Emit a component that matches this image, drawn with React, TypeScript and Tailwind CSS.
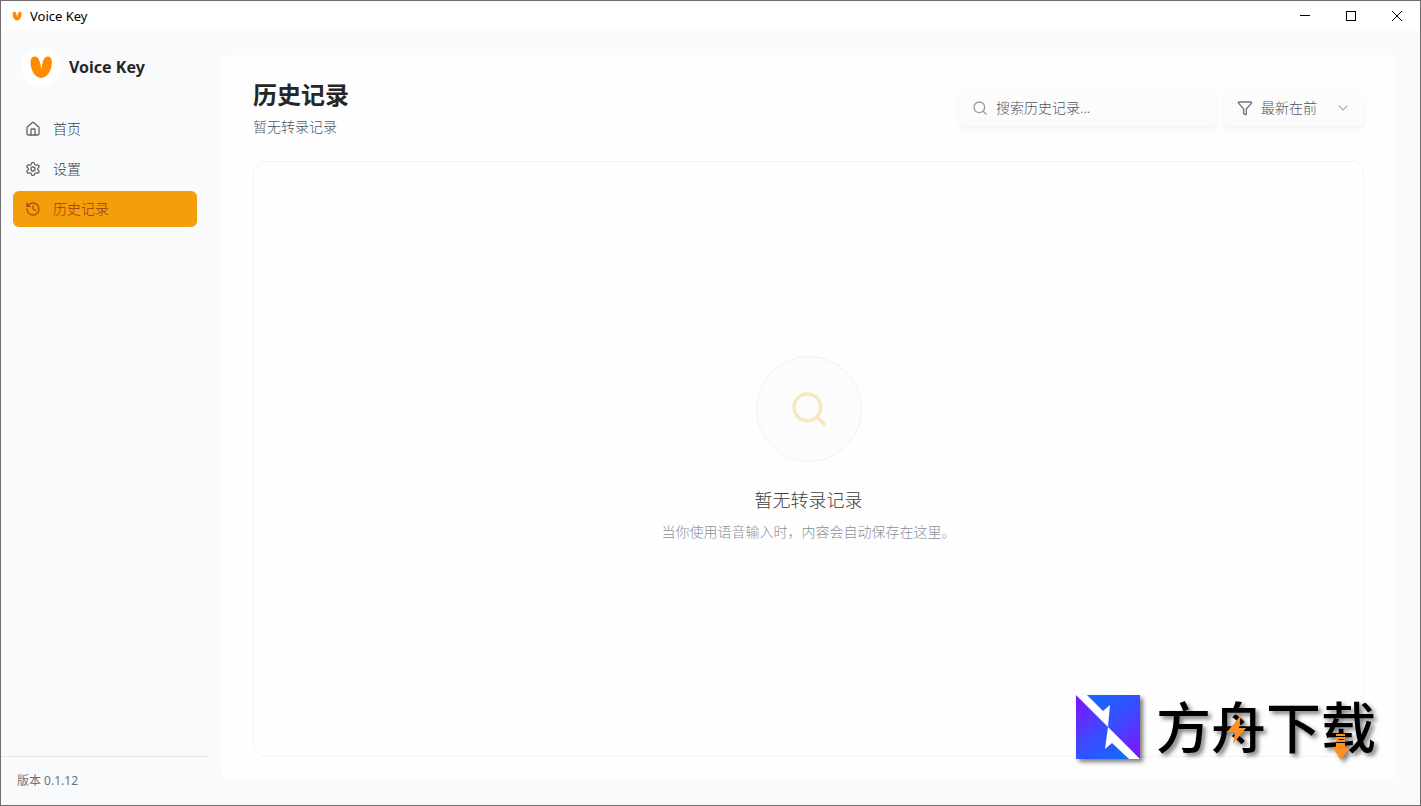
import React, { useState } from 'react';
import { ChevronDown, Funnel, History, House, Search, Settings } from 'lucide-react';
import type { LucideIcon } from 'lucide-react';

const navItems: { id: string; label: string; icon: LucideIcon }[] = [
  { id: 'home', label: '首页', icon: House },
  { id: 'settings', label: '设置', icon: Settings },
  { id: 'history', label: '历史记录', icon: History },
];

const Logo: React.FC<{ className?: string }> = ({ className }) => (
  <svg viewBox="0 0 24 24" className={className} fill="#ff8c00" aria-hidden="true">
    <path d="M6 1.5C3 1.5 1.5 3.5 1.5 6.8C1.5 15 5.8 23 12.2 23S22.9 15 22.9 6.800C22.900 3.500 21.600 1.500 18.600 1.500C15.400 1.500 13.500 5 12.400 14.500C11 5 9.200 1.500 6 1.500Z" />
  </svg>
);

const TitleBar: React.FC = () => (
  <header className="flex h-[30px] shrink-0 items-center justify-between bg-white">
    <div className="flex items-center gap-2 pl-[11px]">
      <Logo className="h-2.5 w-2.5" />
      <span className="text-[13px] leading-4 text-black">Voice Key</span>
    </div>
    <div className="flex h-full text-black">
      <button aria-label="Minimize" className="flex w-[46px] items-center justify-center">
        <svg width="10" height="10" stroke="currentColor" shapeRendering="crispEdges">
          <path d="M0 4.5H10" />
        </svg>
      </button>
      <button aria-label="Maximize" className="flex w-[46px] items-center justify-center">
        <svg width="10" height="10" fill="none" stroke="currentColor" shapeRendering="crispEdges">
          <path d="M.5 .5H9.5V9.5H.5Z" />
        </svg>
      </button>
      <button aria-label="Close" className="flex w-[46px] items-center justify-center">
        <svg width="10" height="10" stroke="currentColor">
          <path d="M0 0L10 10M10 0L0 10" />
        </svg>
      </button>
    </div>
  </header>
);

const Sidebar: React.FC = () => {
  const [active, setActive] = useState('history');

  return (
    <aside className="flex w-52 shrink-0 flex-col">
      <div className="flex items-center gap-2 px-5 pt-4">
        <div className="flex h-10 w-10 items-center justify-center rounded-full bg-white">
          <Logo className="h-6 w-6" />
        </div>
        <span className="text-base font-bold text-[#262626]">Voice Key</span>
      </div>
      <nav className="mt-6 flex flex-1 flex-col gap-1 px-3">
        {navItems.map(({ id, label, icon: Icon }) => (
          <button
            key={id}
            onClick={() => setActive(id)}
            className={`flex h-9 items-center gap-3 rounded-md px-3 text-sm font-light ${
              active === id ? 'bg-[#f59e0b] text-[#92400e]' : 'text-[#404040]'
            }`}
          >
            <Icon size={16} className="opacity-80" />
            {label}
          </button>
        ))}
      </nav>
      <div className="border-t border-[#e5e7eb] p-4 text-xs text-[#6b7280]">版本 0.1.12</div>
    </aside>
  );
};

const HistoryHeader: React.FC = () => {
  const [query, setQuery] = useState('');

  return (
    <div className="flex items-center justify-between">
      <div>
        <h1 className="text-2xl font-bold text-[#262626]">历史记录</h1>
        <p className="mt-1.5 text-sm font-light text-[#4b5563]">暂无转录记录</p>
      </div>
      <div className="flex gap-2">
        <label className="flex h-9 w-64 items-center gap-2 rounded-md bg-[#fcfcfc] px-3 shadow-[0_3px_6px_rgba(0,0,0,0.05)]">
          <Search size={16} className="shrink-0 text-[#979ca7]" />
          <input
            type="text"
            aria-label="搜索历史记录"
            value={query}
            onChange={(e) => setQuery(e.target.value)}
            placeholder="搜索历史记录..."
            className="w-full bg-transparent text-sm font-light outline-none placeholder:text-[#4b5563]"
          />
        </label>
        <label className="flex h-9 w-[140px] items-center gap-2 rounded-md bg-[#fcfcfc] px-[13px] text-[#6b7280] shadow-[0_3px_6px_rgba(0,0,0,0.05)]">
          <Funnel size={16} className="shrink-0" />
          <select
            aria-label="排序"
            className="min-w-0 flex-1 appearance-none bg-transparent text-sm font-light text-[#4b5563] outline-none"
          >
            <option>最新在前</option>
            <option>最早在前</option>
          </select>
          <ChevronDown size={16} className="shrink-0 opacity-50" />
        </label>
      </div>
    </div>
  );
};

const EmptyState: React.FC = () => (
  <section className="mt-6 flex flex-1 flex-col items-center justify-center rounded-xl border border-[#f4f4f5] pb-5">
    <div className="flex h-[106px] w-[106px] items-center justify-center rounded-full border border-[#f1f1f2] bg-[#fcfcfc]">
      <Search size={40} className="text-[#fce5bd]" />
    </div>
    <h2 className="mt-6 text-lg font-light text-[#404040]">暂无转录记录</h2>
    <p className="mt-2 text-sm font-light text-[#8b909b]">当你使用语音输入时，内容会自动保存在这里。</p>
  </section>
);

const Watermark: React.FC = () => (
  <div className="pointer-events-none absolute right-11 bottom-[46px] flex items-center gap-4 drop-shadow-[3px_3px_2px_rgba(0,0,0,0.5)]">
    <svg width="64" height="64" viewBox="0 0 64 64" aria-hidden="true">
      <defs>
        <linearGradient id="tile-top" gradientUnits="userSpaceOnUse" x1="14" y1="0" x2="64" y2="56">
          <stop offset="0" stopColor="#0f6cff" />
          <stop offset="0.5" stopColor="#3a4cff" />
          <stop offset="1" stopColor="#7a18ff" />
        </linearGradient>
        <linearGradient id="tile-bottom" gradientUnits="userSpaceOnUse" x1="0" y1="8" x2="50" y2="64">
          <stop offset="0" stopColor="#7a18ff" />
          <stop offset="0.5" stopColor="#3a4cff" />
          <stop offset="1" stopColor="#0f6cff" />
        </linearGradient>
      </defs>
      <path d="M0 0H64V64H0Z" fill="white" />
      <path d="M11 0H64V64L32 32L34 10L27 16Z" fill="url(#tile-top)" />
      <path d="M0 0L32 32L29 54L36 48L53 64H0Z" fill="url(#tile-bottom)" />
    </svg>
    <div className="relative text-[55px] leading-[64px] font-medium text-black">
      方舟下载
      <svg viewBox="0 0 220 64" className="absolute inset-0 h-full w-full overflow-visible" fill="#ff8f1f" aria-hidden="true">
        <path d="M85 20L71 37H79L77 49L90 33H83Z" />
        <path d="M180 39H189V41H180ZM180 42H189V44H180ZM180 45H189V47H180ZM180 48H189V53H193L185 65L177 53H180Z" />
      </svg>
    </div>
  </div>
);

const App: React.FC = () => (
  <div className="relative flex h-screen flex-col border border-[#6e6e6e] bg-[#f8fafc] font-['Noto_Sans','Noto_Sans_CJK_SC',sans-serif]">
    <TitleBar />
    <div className="flex min-h-0 flex-1">
      <Sidebar />
      <main className="flex flex-1 py-6 pr-6 pl-3">
        <div className="flex flex-1 flex-col rounded-lg bg-[#fefefe] px-8 py-6">
          <HistoryHeader />
          <EmptyState />
        </div>
      </main>
    </div>
    <Watermark />
  </div>
);

export default App;
